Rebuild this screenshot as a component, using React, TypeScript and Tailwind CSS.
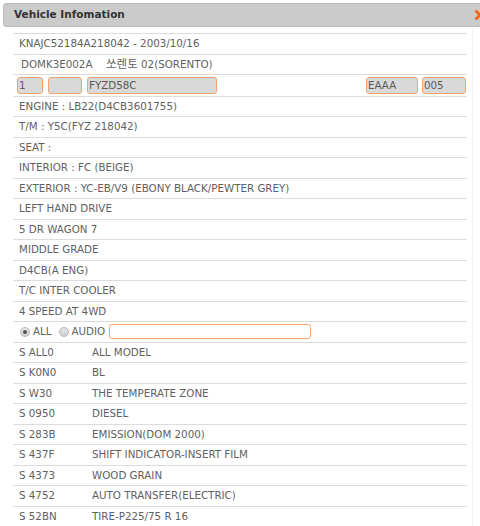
const specs = [
  "ENGINE : LB22(D4CB3601755)",
  "T/M : Y5C(FYZ 218042)",
  "SEAT :",
  "INTERIOR : FC (BEIGE)",
  "EXTERIOR : YC-EB/V9 (EBONY BLACK/PEWTER GREY)",
  "LEFT HAND DRIVE",
  "5 DR WAGON 7",
  "MIDDLE GRADE",
  "D4CB(A ENG)",
  "T/C INTER COOLER",
  "4 SPEED AT 4WD",
];

const options = [
  ["S ALL0", "ALL MODEL"],
  ["S K0N0", "BL"],
  ["S W30", "THE TEMPERATE ZONE"],
  ["S 0950", "DIESEL"],
  ["S 283B", "EMISSION(DOM 2000)"],
  ["S 437F", "SHIFT INDICATOR-INSERT FILM"],
  ["S 4373", "WOOD GRAIN"],
  ["S 4752", "AUTO TRANSFER(ELECTRIC)"],
  ["S 52BN", "TIRE-P225/75 R 16"],
];

function Row({ children }: { children: React.ReactNode }) {
  return (
    <div className="flex h-[20.5px] items-center border-b border-[#dcdcdc] pl-[6px]">
      {children}
    </div>
  );
}

function Field({ value, className }: { value: string; className: string }) {
  return (
    <div
      className={`flex h-[17px] items-center rounded-[3px] border border-[#f4a36a] bg-[#d9d9d9] pl-[1px] text-[#5a5a5a] ${className}`}
    >
      {value}
    </div>
  );
}

function Radio({ checked }: { checked?: boolean }) {
  return (
    <span className="flex h-[10px] w-[10px] items-center justify-center rounded-full border border-[#b5b5b5] bg-gradient-to-b from-[#e6e6e6] to-[#cfcfcf]">
      {checked && <span className="h-[4px] w-[4px] rounded-full bg-[#555]" />}
    </span>
  );
}

export default function App() {
  return (
    <div className="h-[526px] w-[480px] overflow-hidden bg-white font-['DejaVu_Sans','Noto_Sans_CJK_KR',sans-serif] text-[10.3px] text-[#616161]">
      <div className="pl-[3px] pt-[3px]">
        <div className="relative flex h-[24px] items-center rounded-l-[4px] border border-r-0 border-[#b9b9b9] bg-[#cbcbcb] pl-[10px] text-[10.5px] font-bold text-[#333]">
          Vehicle Infomation
          <svg
            viewBox="0 0 8 12"
            className="absolute right-[-2px] top-[5px] h-[12px] w-[8px]"
          >
            <polyline
              points="1.5,1.5 6,6 1.5,10.5"
              fill="none"
              stroke="#f06a1c"
              strokeWidth="3"
            />
          </svg>
        </div>
      </div>

      <div className="w-[473px] border-r border-[#f0f0f0] pl-[13px] pr-[5px] pt-[6px]">
        <div className="border-t border-[#dcdcdc]">
          <Row>KNAJC52184A218042 - 2003/10/16</Row>
          <Row>
            <span className="w-[87px] pl-[2px]">DOMK3E002A</span>
            <span>
              <span className="text-[11.5px]">쏘렌토</span> 02(SORENTO)
            </span>
          </Row>
          <div className="flex h-[21.5px] items-center border-b border-[#dcdcdc] pl-[4px]">
            <Field value="1" className="w-[26px]" />
            <Field value="" className="ml-[5px] w-[34px]" />
            <Field value="FYZD58C" className="ml-[5px] w-[130px]" />
            <Field value="EAAA" className="ml-auto w-[52px]" />
            <Field value="005" className="ml-[4px] mr-[1px] w-[44px]" />
          </div>
          {specs.map((s) => (
            <Row key={s}>{s}</Row>
          ))}
          <Row>
            <span className="flex items-center gap-[3px] pl-[1px]">
              <Radio checked />
              ALL
            </span>
            <span className="ml-[7px] flex items-center gap-[3px]">
              <Radio />
              AUDIO
            </span>
            <span className="ml-[4px] h-[15px] w-[202px] rounded-[3px] border border-[#f6a66e] bg-white" />
          </Row>
          {options.map(([code, name]) => (
            <Row key={code}>
              <span className="w-[73px]">{code}</span>
              <span>{name}</span>
            </Row>
          ))}
        </div>
      </div>
    </div>
  );
}
